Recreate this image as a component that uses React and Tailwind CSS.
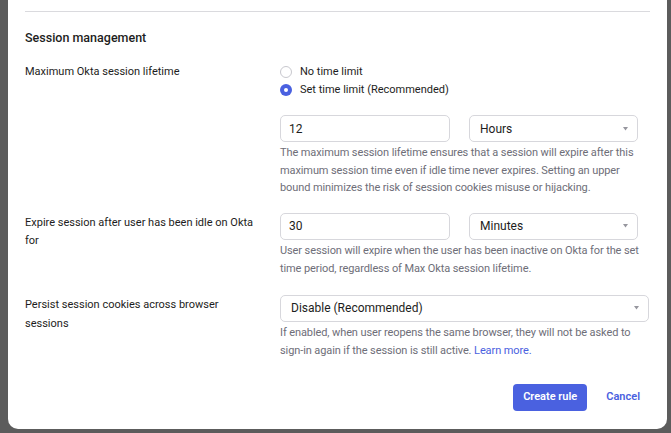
import React from "react";

const font = { fontFamily: "Roboto, 'Noto Sans', sans-serif" };

function Caret() {
  return (
    <svg width="5" height="4" viewBox="0 0 5 4" className="shrink-0 mr-[1px]">
      <path d="M0 0 L5 0 L2.5 3.5 Z" fill="#96969e" />
    </svg>
  );
}

function Field({ value, className }) {
  return (
    <div className={`h-[27px] border border-[#d7d7dc] rounded-[5px] flex items-center pl-[8px] text-[12px] text-[#1d1d21] bg-white ${className}`}>
      {value}
    </div>
  );
}

function Select({ value, className }) {
  return (
    <div className={`h-[27px] border border-[#d7d7dc] rounded-[5px] flex items-center justify-between pl-[10px] pr-[8px] text-[12px] text-[#1d1d21] bg-white ${className}`}>
      <span>{value}</span>
      <Caret />
    </div>
  );
}

function Radio({ checked, label }) {
  return (
    <div className="h-[18px] flex items-center">
      {checked ? (
        <span className="w-[12px] h-[12px] rounded-full bg-[#4a61e0] flex items-center justify-center">
          <span className="w-[4px] h-[4px] rounded-full bg-white" />
        </span>
      ) : (
        <span className="w-[12px] h-[12px] rounded-full border border-[#c8c8ce] bg-white" />
      )}
      <span className="ml-[8px] text-[11px] text-[#1d1d21]">{label}</span>
    </div>
  );
}

export default function App() {
  return (
    <div className="w-[671px] h-[433px] bg-[#5c5c5c] overflow-hidden" style={font}>
      <div className="ml-[8px] w-[659px] h-[429px] bg-white rounded-b-[10px] pl-[17px] pr-[17px] pt-[11px] flex flex-col">
        <div className="h-px bg-[#dadade]" />
        <div className="mt-[17px] h-[18px] leading-[18px] text-[12.5px] font-medium text-[#1d1d21]">Session management</div>

        <div className="mt-[16px] flex">
          <div className="w-[255px] pr-[20px] text-[11px] leading-[18px] text-[#1d1d21]">Maximum Okta session lifetime</div>
          <div className="flex-1">
            <Radio label="No time limit" />
            <Radio checked label="Set time limit (Recommended)" />
            <div className="mt-[16px] flex gap-[19px]">
              <Field value="12" className="w-[170px]" />
              <Select value="Hours" className="w-[169px]" />
            </div>
            <p className="mt-[2px] text-[11px] leading-[17.5px] text-[#6e6e78] tracking-[-0.1px]">
              The maximum session lifetime ensures that a session will expire after this maximum session time even if idle time never expires. Setting an upper bound minimizes the risk of session cookies misuse or hijacking.
            </p>
          </div>
        </div>

        <div className="mt-[16px] flex">
          <div className="w-[255px] pr-[20px] text-[11px] leading-[18px] text-[#1d1d21] pt-[1px]">Expire session after user has been idle on Okta for</div>
          <div className="flex-1">
            <div className="flex gap-[19px]">
              <Field value="30" className="w-[170px]" />
              <Select value="Minutes" className="w-[169px]" />
            </div>
            <p className="mt-[2px] text-[11px] leading-[18px] text-[#6e6e78] tracking-[-0.1px]">
              User session will expire when the user has been inactive on Okta for the set time period, regardless of Max Okta session lifetime.
            </p>
          </div>
        </div>

        <div className="mt-[17px] flex">
          <div className="w-[255px] pr-[20px] text-[11px] leading-[19px] text-[#1d1d21]">Persist session cookies across browser sessions</div>
          <div className="flex-1">
            <Select value="Disable (Recommended)" className="w-[369px]" />
            <p className="mt-[2px] text-[11px] leading-[18px] text-[#6e6e78] tracking-[-0.1px]">
              If enabled, when user reopens the same browser, they will not be asked to sign-in again if the session is still active. <span className="text-[#4a61e0]">Learn more.</span>
            </p>
          </div>
        </div>

        <div className="mt-auto mb-[18px] flex justify-end items-center">
          <button className="h-[27px] px-[10px] rounded-[4px] bg-[#4a61e0] text-white text-[11px] font-semibold">Create rule</button>
          <button className="ml-[19px] mr-[10px] text-[11px] font-semibold text-[#4a61e0]">Cancel</button>
        </div>
      </div>
    </div>
  );
}
